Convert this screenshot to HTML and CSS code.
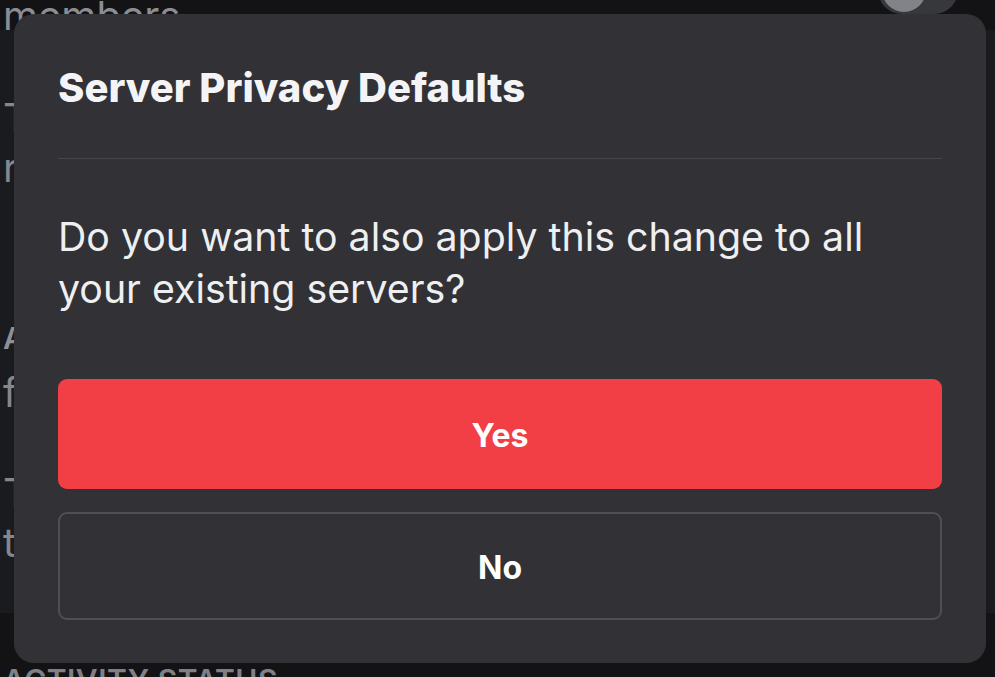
FILE: index.html
```html
<!DOCTYPE html>
<html lang="en">
<head>
<meta charset="utf-8">
<title>Server Privacy Defaults</title>
<link rel="stylesheet" href="styles.css">
</head>
<body>
<div class="page">
  <div class="top-row">
    <span class="members">members</span>
    <span class="toggle"><span class="knob"></span></span>
  </div>
  <div class="card">
    <p class="desc first">This setting is applied when you join a new<br>restricted server on this account.</p>
    <p class="setting-title">Allow access to age-restricted servers</p>
    <p class="desc single">for everyone on this device.</p>
    <p class="desc third">This applies to all servers you join and<br>the messages you receive from them.</p>
  </div>
  <h2 class="section">Activity Status</h2>
</div>

<div class="modal" role="dialog" aria-labelledby="modal-title">
  <h1 class="modal-title" id="modal-title">Server Privacy Defaults</h1>
  <div class="divider"></div>
  <p class="modal-body">Do you want to also apply this change to all your existing servers?</p>
  <button class="btn btn-yes" type="button">Yes</button>
  <button class="btn btn-no" type="button">No</button>
</div>
</body>
</html>
```
FILE: styles.css
```css
* { box-sizing: border-box; }

html, body {
  margin: 0;
  height: 100%;
}

body {
  background: #131315;
  font-family: Inter, "Noto Sans", "Liberation Sans", sans-serif;
  overflow: hidden;
  position: relative;
}

.page {
  padding-left: 3px;
  color: #85878c;
}

.top-row {
  display: flex;
  justify-content: space-between;
  align-items: flex-start;
  height: 64px;
  margin-top: -34px;
}

.members {
  display: block;
  margin-top: 25.5px;
  font-size: 40px;
  line-height: 48px;
  color: #8c8d92;
}

.toggle {
  display: flex;
  align-items: center;
  width: 80px;
  height: 48px;
  padding: 0 4px;
  margin-right: 37px;
  border-radius: 24px;
  background: #37383c;
}

.knob {
  width: 44px;
  height: 44px;
  border-radius: 50%;
  background: #818388;
}

.card {
  background: #1a1b1e;
  margin-left: -3px;
  padding: 62.5px 0 45.5px 3px;
}

.desc {
  margin: 0;
  font-size: 40px;
  line-height: 50px;
  white-space: nowrap;
}

.setting-title {
  margin: 125.5px 0 0;
  font-size: 30px;
  line-height: 40px;
  font-weight: 600;
  color: #8f9095;
  white-space: nowrap;
}

.desc.single { margin-top: 9.5px; }
.desc.third { margin-top: 50px; }

.section {
  margin: 47px 0 0;
  font-size: 30px;
  line-height: 40px;
  font-weight: 600;
  text-transform: uppercase;
  color: #7f8186;
  letter-spacing: 0.5px;
}

.modal {
  position: absolute;
  top: 14px;
  left: 14px;
  width: 972px;
  height: 649px;
  padding: 50px 44px 43px;
  display: flex;
  flex-direction: column;
  background: #313136;
  border-radius: 20px;
}

.modal-title {
  margin: 0;
  font-size: 40px;
  line-height: 48px;
  font-weight: 800;
  color: #f4f4f6;
}

.divider {
  margin-top: 46px;
  height: 1px;
  background: #46474c;
}

.modal-body {
  margin: 52px 0 0;
  font-size: 39.3px;
  line-height: 52px;
  font-weight: 400;
  color: #eeeff1;
}

.btn {
  display: flex;
  align-items: center;
  justify-content: center;
  width: 100%;
  font-family: inherit;
  font-size: 32px;
  font-weight: 700;
  color: #ffffff;
  border-radius: 9px;
  cursor: pointer;
}

.btn-yes {
  margin-top: 64px;
  height: 110px;
  padding-top: 3px;
  background: #f23f46;
  border: none;
}

.btn-no {
  margin-top: 23px;
  height: 108px;
  padding-top: 3px;
  background: transparent;
  border: 2px solid #4e5056;
}
```
